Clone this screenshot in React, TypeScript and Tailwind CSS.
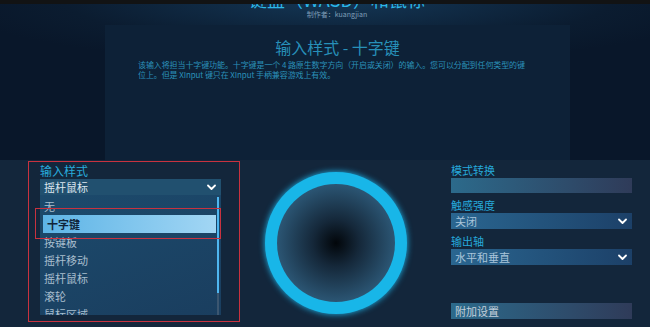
import React from 'react';

const font = "font-['Noto_Sans_CJK_SC','Noto_Sans',sans-serif]";

function Chevron() {
  return (
    <svg width="9" height="7" viewBox="0 0 9 7" className="shrink-0">
      <path d="M1 1.5 L4.5 5 L8 1.5" fill="none" stroke="#ffffff" strokeWidth="1.8" strokeLinecap="round" strokeLinejoin="round" />
    </svg>
  );
}

const items = ['无', '十字键', '按键板', '摇杆移动', '摇杆鼠标', '滚轮', '鼠标区域'];

function StyleDropdown() {
  return (
    <div className="relative mt-px ml-[28px] h-[161px] w-[212px] border border-[#c8323f] pl-[11px] pt-px">
      <div className="h-[16px] text-[12px] leading-[16px] text-[#28abdc]">输入样式</div>
      <div className="w-[181px]">
        <div className="flex h-[16px] items-center justify-between bg-[#21506f] pl-[4px] pr-[5px] text-[11px] text-[#dde7ef]">
          <span>摇杆鼠标</span>
          <Chevron />
        </div>
        <div className="relative h-[120px] overflow-hidden bg-[linear-gradient(160deg,#1c4a6c,#1a3e5f)] pt-[2px]">
          {items.map((it) =>
            it === '十字键' ? (
              <div key={it} className="ml-[3px] flex h-[18px] w-[173px] items-center bg-[linear-gradient(90deg,#5db4e6,#a2d6f4)] pl-[4px] text-[11px] font-bold text-[#10253a]">
                {it}
              </div>
            ) : (
              <div key={it} className="flex h-[18px] items-center pl-[4px] text-[11px] text-[#a9bfcf]">
                {it}
              </div>
            )
          )}
          <div className="absolute right-[2px] top-[2px] h-[118px] w-[2px] bg-[#3b5670]">
            <div className="h-[96px] w-[2px] bg-[#4fb6f0]" />
          </div>
        </div>
      </div>
      <div className="absolute left-[6px] top-[46px] h-[31px] w-[186px] border border-[#c8323f]" />
    </div>
  );
}

function Stick() {
  return (
    <div className="ml-[25px] mt-[12px] h-[142px] w-[142px] rounded-full bg-[#18b6e8] p-[12px] shadow-[0_0_6px_#1fb8ee]">
      <div className="h-full w-full rounded-full bg-[radial-gradient(circle,#02060a_0%,#15283a_28%,#2b5573_70%,#3d7293_100%)]" />
    </div>
  );
}

function Label({ children, first }: { children: React.ReactNode; first?: boolean }) {
  return (
    <div className={`${first ? '' : 'mt-[4px]'} h-[16px] text-[11px] leading-[16px] text-[#26a9da]`}>{children}</div>
  );
}

function RightPanel() {
  return (
    <div className="ml-[44px] w-[181px] pt-[2px]">
      <Label first>模式转换</Label>
      <div className="h-[15px] bg-[linear-gradient(90deg,#2c6a8b,#2f3b59)]" />
      <Label>触感强度</Label>
      <div className="flex h-[16px] items-center justify-between bg-[linear-gradient(90deg,#2a6690,#1c4068)] pl-[4px] pr-[5px] text-[11px] text-[#a9c5da]">
        <span>关闭</span>
        <Chevron />
      </div>
      <Label>输出轴</Label>
      <div className="flex h-[16px] items-center justify-between bg-[linear-gradient(90deg,#2a6690,#1c4068)] pl-[4px] pr-[5px] text-[11px] text-[#a9c5da]">
        <span>水平和垂直</span>
        <Chevron />
      </div>
      <div className="mt-[38px] flex h-[16px] items-center bg-[linear-gradient(90deg,#2c6a8b,#2f3b59)] pl-[4px] text-[11px] text-[#c3cfdb]">
        附加设置
      </div>
    </div>
  );
}

export default function App() {
  return (
    <div className={`${font} h-[327px] w-[650px] overflow-hidden bg-[#0a1828]`}>
      <div className="h-[160px] bg-[radial-gradient(ellipse_60%_40%_at_52%_0%,#143756_0%,#0b1c30_70%,#09172a_100%)]">
        <div className="relative h-[25px] overflow-hidden pl-[24px]">
          <div className="-mt-[12px] text-center text-[18px] leading-[22px] text-[#2cb6e6]">键盘（WASD）和鼠标</div>
          <div className="text-center text-[7px] leading-[8px] text-[#7f9fb8]">制作者：kuangjian</div>
          <div className="absolute left-0 top-0 h-[4px] w-full bg-[#121314]" />
        </div>
        <div className="ml-[105px] mr-[80px] h-[135px] bg-[#0d2137] px-[31px] pt-[10px]">
          <div className="text-center text-[16px] leading-[24px] text-[#2790b9]">输入样式 - 十字键</div>
          <p className="mt-[1px] whitespace-nowrap px-[2px] text-[8px] leading-[10px] tracking-[-0.1px] text-[#2b91b9]">
            该输入将担当十字键功能。十字键是一个 4 路原生数字方向（开启或关闭）的输入。您可以分配到任何类型的键
            <br />
            位上。但是 XInput 键只在 XInput 手柄兼容游戏上有效。
          </p>
        </div>
      </div>
      <div className="flex h-[167px] bg-[#13263b]">
        <StyleDropdown />
        <Stick />
        <RightPanel />
      </div>
    </div>
  );
}
